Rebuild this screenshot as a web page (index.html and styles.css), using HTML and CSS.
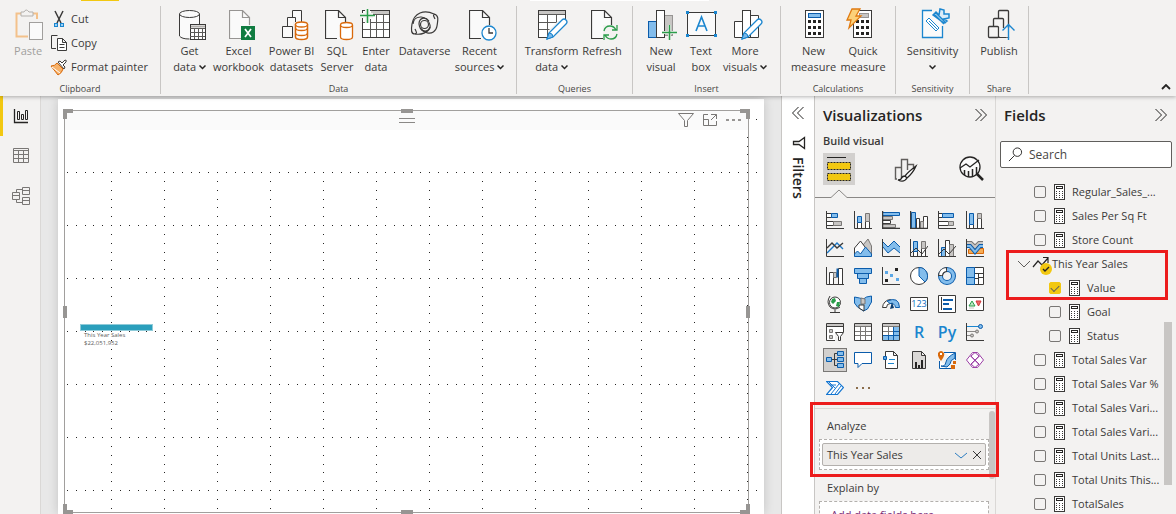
FILE: index.html
```html
<!DOCTYPE html>
<html lang="en">
<head>
<meta charset="utf-8">
<title>Report editor</title>
<link rel="stylesheet" href="styles.css">
</head>
<body>
<svg class="defs" aria-hidden="true">
  <symbol id="calc" viewBox="0 0 12 16"><rect x=".5" y=".5" width="10" height="15" fill="#fff" stroke="#3b3a39"/><rect x="2.5" y="2.5" width="6" height="2" fill="#fff" stroke="#252423"/><path d="M2 7.500h7M2 9.500h7M2 11.500h7M2 13.500h7" stroke="#3b3a39" stroke-dasharray="1 2" fill="none"/></symbol>
  <symbol id="down" viewBox="0 0 7 5"><path d="M.5 .5l3 3 3-3" fill="none" stroke="#252423" stroke-width="1.500"/></symbol>
  <symbol id="dbl" viewBox="0 0 14 14"><path d="M1.500 1l6 6-6 6M6.500 1l6 6-6 6" fill="none" stroke="#252423"/></symbol>
  <symbol id="pencil" viewBox="0 0 22 22"><path d="M1 21l2-6L16 2q2-2 4 0t0 4L7 19z" fill="#fff" stroke="#1b86cf" stroke-width="1.300"/><path d="M1 21l2-6q4 0 4 4z" fill="#7ab8e8" stroke="#1b86cf"/></symbol>
  <symbol id="doc" viewBox="0 0 22 30"><path d="M.5 .5h13l7 7v21.500h-20z" fill="#fafafa" stroke="none"/><path d="M12 28.500H.5V.5h13l7 7V15M13.500 .5v7h7" fill="none" stroke="currentColor" stroke-width="1.200"/></symbol>
</svg>
<header class="ribbon">
  <div class="tabs"><i class="tab-active"></i><i class="tab-white"></i></div>
  <section class="group clipboard">
    <div class="tools">
      <button class="big paste"><svg class="ico" viewBox="0 0 32 32"><path d="M9 4.500H4.500v23H16M21 4.500h4V10" fill="none" stroke="#f3c18b" stroke-width="2"/><path d="M9 7V3h3q2-4 5 0h4v4z" fill="#f3f2f1" stroke="#b3b0ad"/><rect x="17.500" y="13.500" width="13" height="17" fill="#fafafa" stroke="#a19f9d"/></svg><span>Paste</span></button>
      <div class="small-list">
        <button class="small"><svg viewBox="0 0 18 18"><path d="M5 1l6 12M13 1L7 13" stroke="#3b3a39" stroke-width="1.500"/><rect x="4.500" y="13.500" width="3" height="3" fill="#9bd0f5" stroke="#1b86cf"/><rect x="10.500" y="13.500" width="3" height="3" fill="#9bd0f5" stroke="#1b86cf"/></svg><span>Cut</span></button>
        <button class="small"><svg viewBox="0 0 18 18"><path d="M6 14.500H1.500v-13h6" fill="none" stroke="#3b3a39"/><path d="M7.500 4.500h5l4 4v8h-9zM12.500 4.500v4h4M9.500 10.500h5M9.500 13.500h5" fill="#fff" stroke="#3b3a39"/></svg><span>Copy</span></button>
        <button class="small"><svg viewBox="0 0 18 18"><path d="M1 8q4 0 6-3l6 6q-1 4-5 6z" fill="#f6b26b" stroke="#d9690b"/><path d="M2 9l8 6" stroke="#fff"/><path d="M8 4l2-1 2 2 3-3q2 0 1 2l-3 3 2 2-1 2z" fill="#fff" stroke="#3b3a39"/></svg><span>Format painter</span></button>
      </div>
    </div>
    <h2>Clipboard</h2>
  </section>
  <section class="group data">
    <div class="tools">
      <button class="big w46"><svg class="ico" viewBox="0 0 32 32"><path d="M6 5h19v10H16v15Q8 30 6 27z" fill="#fafafa"/><ellipse cx="15.500" cy="5" rx="10" ry="3.500" fill="#fafafa" stroke="#3b3a39"/><path d="M5.500 5v22q2 3 10 3M25.500 5v10" fill="none" stroke="#3b3a39"/><rect x="16.500" y="15.500" width="15" height="15" fill="#fff" stroke="#3b3a39"/><path d="M17 17.500h14" stroke="#b3b0ad" stroke-width="2"/><path d="M16 19.500h15M16 23.500h15M16 27.500h15M20.500 19v11M24.500 19v11M28.500 19v11" stroke="#5b5a58"/></svg><span>Get<br>data <svg class="dn"><use href="#down"/></svg></span></button>
      <button class="big w52"><svg class="ico grey" viewBox="0 0 32 32"><use href="#doc" x="6" y="1" width="22" height="30"/><rect x="18" y="17" width="14" height="14" fill="#107c41"/><path d="M22 20l6 8M28 20l-6 8" stroke="#fff" stroke-width="1.700"/></svg><span>Excel<br>workbook</span></button>
      <button class="big w54"><svg class="ico" viewBox="0 0 32 32"><path d="M16.500 28V1.500h9V28z" fill="#fafafa" stroke="#3b3a39"/><path d="M11.500 28V8.500h8V28z" fill="#fafafa" stroke="#3b3a39"/><path d="M6.500 28.500v-11h10v11z" fill="#fafafa" stroke="#3b3a39"/><path d="M17 13h15v18H17z" fill="#f3f2f1"/><path d="M19.500 15v13q0 2.500 6 2.500t6-2.500V15" fill="#fff" stroke="#d9690b" stroke-width="1.500"/><ellipse cx="25.500" cy="15.500" rx="6" ry="2.500" fill="#fff" stroke="#d9690b" stroke-width="1.300"/><path d="M19.500 19q0 2.500 6 2.500t6-2.500M19.500 24q0 2.500 6 2.500t6-2.500" fill="none" stroke="#d9690b" stroke-width="1.300"/></svg><span>Power BI<br>datasets</span></button>
      <button class="big w37"><svg class="ico" viewBox="0 0 32 32"><use href="#doc" x="4" y="1" width="22" height="30"/><path d="M19.500 16v12q0 2.500 6 2.500t6-2.500V16" fill="#fff" stroke="#d9690b" stroke-width="1.300"/><ellipse cx="25.500" cy="16" rx="6" ry="2.500" fill="#fff" stroke="#d9690b" stroke-width="1.300"/></svg><span>SQL<br>Server</span></button>
      <button class="big w41"><svg class="ico" viewBox="0 0 32 32"><rect x="2.500" y="1.500" width="27" height="27" fill="#fff" stroke="#3b3a39"/><path d="M11 3.500h18" stroke="#c8c6c4" stroke-width="3"/><path d="M3 13.500h26M3 20.500h26M10.500 10v18M16.500 6v22M23.500 6v22M10 5.500h19" stroke="#5b5a58" fill="none"/><path d="M0 6.500h13M7.500 0v14" stroke="#f3f2f1" stroke-width="5"/><path d="M0 6.500h15M7.500 0v14" stroke="#2a9d4a" stroke-width="1.500"/></svg><span>Enter<br>data</span></button>
      <button class="big w56"><svg class="ico" viewBox="0 0 32 32"><g fill="none" stroke="#3b3a39" stroke-width="1.200"><path d="M20 12c-4-5-10-3-10 3 0 9 16 14 18 2 1-6 2-11-3-12C15 0 5 4 3 15c-1 6-1 10 3 10 6 1 13-1 15-7"/><path d="M11 19c5 6 11 2 10-3C19 6 5 5 4 15M26 5c-2 1-2 1 0 5M6 25c2-1 2-1 0-5"/><circle cx="15.500" cy="15.500" r="4"/></g></svg><span>Dataverse</span></button>
      <button class="big w54"><svg class="ico" viewBox="0 0 32 32"><use href="#doc" x="5" y="1" width="22" height="30"/><circle cx="25" cy="24" r="7" fill="#fff" stroke="#1b86cf" stroke-width="1.300"/><path d="M25 19v5h4" fill="none" stroke="#3b3a39" stroke-width="1.300"/></svg><span>Recent<br>sources <svg class="dn"><use href="#down"/></svg></span></button>
    </div>
    <h2>Data</h2>
  </section>
  <section class="group queries">
    <div class="tools">
      <button class="big w55"><svg class="ico" viewBox="0 0 32 32"><rect x="2.500" y="1.500" width="27" height="27" fill="#fff" stroke="#3b3a39"/><path d="M3 3.500h26" stroke="#c8c6c4" stroke-width="3"/><path d="M3 5.500h26M3 13.500h26M3 20.500h26M11.500 6v22M20.500 6v22" stroke="#5b5a58"/><path d="M12 32V22l10-10h10v20z" fill="#f3f2f1"/><use href="#pencil" x="10" y="9" width="22" height="22"/></svg><span>Transform<br>data <svg class="dn"><use href="#down"/></svg></span></button>
      <button class="big w46"><svg class="ico" viewBox="0 0 32 32"><use href="#doc" x="5" y="1" width="22" height="30"/><rect x="17" y="16" width="15" height="15" fill="#f3f2f1"/><path d="M18 22q1-5 6-5 4 0 6 4M31 16v5h-5M31 25q-1 5-6 5-4 0-6-4M18 31v-5h5" fill="none" stroke="#2a9d4a" stroke-width="1.300"/></svg><span>Refresh</span></button>
    </div>
    <h2>Queries</h2>
  </section>
  <section class="group insert">
    <div class="tools">
      <button class="big w44"><svg class="ico" viewBox="0 0 32 32"><rect x="3.500" y="12.500" width="8" height="16" fill="#83bdec" stroke="#0b5cab"/><rect x="19.500" y="6.500" width="8" height="20" fill="#c8c6c4" stroke="#979593"/><rect x="11.500" y="1.500" width="8" height="27" fill="#fff" stroke="#3b3a39"/><path d="M24.500 16v15M17 23.500h15" stroke="#f3f2f1" stroke-width="3"/><path d="M24.500 16v15M17 23.500h15" stroke="#2a9d4a" stroke-width="1.500"/></svg><span>New<br>visual</span></button>
      <button class="big w36"><svg class="ico" viewBox="0 0 32 32"><rect x="2.500" y="3.500" width="28" height="23" fill="#fafafa" stroke="#3b3a39"/><path d="M1 2h3v3H1zM29 2h3v3h-3zM1 25h3v3H1zM29 25h3v3h-3z" fill="#1b86cf"/><path d="M11 22l5.500-14L22 22M13 17h7" fill="none" stroke="#1b86cf" stroke-width="1.600"/></svg><span>Text<br>box</span></button>
      <button class="big w52"><svg class="ico" viewBox="0 0 32 32"><path d="M5.500 28.500v-16h8v16zM21.500 6.500h8v22h-8z" fill="#fff" stroke="#3b3a39"/><rect x="13.500" y="1.500" width="8" height="27" fill="#fff" stroke="#3b3a39"/><use href="#pencil" x="12" y="9" width="22" height="22"/></svg><span>More<br>visuals <svg class="dn"><use href="#down"/></svg></span></button>
    </div>
    <h2>Insert</h2>
  </section>
  <section class="group calcs">
    <div class="tools">
      <button class="big w50"><svg class="ico" viewBox="0 0 32 32"><rect x="7.500" y="1.500" width="18" height="27" fill="#fff" stroke="#3b3a39"/><rect x="10.500" y="4.500" width="12" height="4" fill="#83bdec" stroke="#0b5cab"/><path d="M10 12.500h13M10 18.500h13M10 24.500h13" stroke="#252423" stroke-width="3" stroke-dasharray="3 2"/></svg><span>New<br>measure</span></button>
      <button class="big w49"><svg class="ico" viewBox="0 0 32 32"><rect x="6.500" y="1.500" width="18" height="27" fill="#fff" stroke="#3b3a39"/><rect x="12.500" y="4.500" width="9" height="4" fill="#c8c6c4" stroke="#979593"/><path d="M9 12.500h13M9 18.500h13M9 24.500h13" stroke="#252423" stroke-width="3" stroke-dasharray="3 2"/><path d="M5 0h8l-4 7h5L2 19l2-8H0z" fill="#fbd17a" stroke="#e07a10" stroke-width="1.300"/></svg><span>Quick<br>measure</span></button>
    </div>
    <h2>Calculations</h2>
  </section>
  <section class="group sens">
    <div class="tools">
      <button class="big w56"><svg class="ico" viewBox="0 0 32 32"><path d="M15 1.500H5.500v27h20V17" fill="#fafafa" stroke="#1b86cf" stroke-width="1.300"/><path d="M9 12l3-3 10 10-3 3zM12 12l8 8" fill="#fff" stroke="#1b86cf"/><path d="M17 5l10 10M18 3l11 11M16 6l3-3 3 3 1-6 4 1 0 4 5 0 0 4-5 1 3 2-3 2z" fill="#dcecf8" stroke="#1b86cf" stroke-width="1.500"/></svg><span>Sensitivity<br><svg class="dn"><use href="#down"/></svg></span></button>
    </div>
    <h2>Sensitivity</h2>
  </section>
  <section class="group share">
    <div class="tools">
      <button class="big w50"><svg class="ico" viewBox="0 0 32 32"><g fill="#f6f5f4" stroke="#3b3a39" stroke-width="1.300"><path d="M15.500 28V2.500q0-1 1-1h8q1 0 1 1V28z"/><path d="M10.500 28V10.500q0-1 1-1h8q1 0 1 1V28z"/><rect x="5.500" y="17.500" width="10" height="11" rx="1"/></g><path d="M16.500 19h14v9h-14z" fill="#f3f2f1"/><path d="M15.500 28.500H23" stroke="#3b3a39"/><path d="M25.500 31V16M19.500 21.500l6-6 6 6" fill="none" stroke="#1b86cf" stroke-width="1.400"/></svg><span>Publish</span></button>
    </div>
    <h2>Share</h2>
  </section>
  <button class="collapse" aria-label="Collapse ribbon"><svg viewBox="0 0 10 6"><path d="M1 5l4-4 4 4" fill="none" stroke="#252423" stroke-width="1.800"/></svg></button>
</header>
<main class="work">
  <nav class="rail">
    <button class="active" aria-label="Report"><svg viewBox="0 0 18 18"><path d="M2.500 2v13.500H16" stroke="#252423" fill="none" stroke-width="1.300"/><path d="M5.500 4.500h2v8h-2zM9.500 7.500h2v5h-2zM13.500 3.500h2v9h-2z" fill="none" stroke="#252423"/></svg></button>
    <button aria-label="Data"><svg viewBox="0 0 18 18"><path d="M1.500 1.500h15v14h-15zM1 3.500h16M1 7.500h16M1 11.500h16M6.500 4v12M11.500 4v12" fill="none" stroke="#797775"/></svg></button>
    <button aria-label="Model"><svg viewBox="0 0 18 18"><path d="M.5 5.500h7v7h-7zM.5 8.500h7M10.500 .5h7v7h-7zM10.500 3.500h7M10.500 10.500h7v7h-7zM10.500 13.500h7M4.500 5V2.500h6M4.500 13v2.500h6" fill="none" stroke="#797775"/></svg></button>
  </nav>
  <section class="canvas">
    <div class="page">
      <svg class="grid" aria-hidden="true">
        <defs>
          <pattern id="rows" x="0" y="20" width="53" height="53" patternUnits="userSpaceOnUse"><path d="M0 0h1v1H0zM9 0h1v1H9zM18 0h1v1h-1zM27 0h1v1h-1zM35 0h1v1h-1zM44 0h1v1h-1zM0 9h1v1H0zM0 18h1v1H0zM0 27h1v1H0zM0 35h1v1H0zM0 44h1v1H0z" fill="#252423"/></pattern>
        </defs>
        <rect x="7" y="73" width="100%" height="100%" fill="url(#rows)"/>
        <rect x="687" y="20" width="12" height="53" fill="url(#rows)"/>
      </svg>
      <div class="visual">
        <i class="h tl"></i><i class="h tr"></i><i class="h bl"></i><i class="h br"></i><i class="h ml"></i><i class="h mr"></i><i class="h mt"></i><i class="h mb"></i>
        <div class="visual-head">
          <svg class="grip" viewBox="0 0 16 6"><path d="M0 .5h16M0 4.500h16" stroke="#8a8886"/></svg>
          <div class="head-icons">
            <svg viewBox="0 0 18 18"><path d="M1.500 2.500h15l-6 7v6h-3v-6z" fill="none" stroke="#797775"/></svg>
            <svg viewBox="0 0 18 18"><path d="M7 3.500H2.500v11h13V10M10 3.500h5.500V8M15.500 3.500L10 9M2.500 8.500h5v6" fill="none" stroke="#797775"/></svg>
            <svg viewBox="0 0 18 18"><path d="M1 8h3v2H1zM7 8h3v2H7zM13 8h3v2h-3z" fill="#979593"/></svg>
          </div>
        </div>
        <div class="node"><div class="bar"></div><p>This Year Sales<br>$22,051,952</p></div>
      </div>
    </div>
  </section>
  <aside class="filters">
    <svg class="dbl flip"><use href="#dbl"/></svg>
    <svg class="funnel" viewBox="0 0 14 14"><path d="M12.500 1.500v11L7 8.500H1.500v-3H7z" fill="none" stroke="#252423" stroke-width="1.300"/></svg>
    <h2>Filters</h2>
  </aside>
  <aside class="vis">
    <div class="pane-head"><h2>Visualizations</h2><svg class="dbl"><use href="#dbl"/></svg></div>
    <h3>Build visual</h3>
    <div class="modes">
      <button class="on" aria-label="Build"><svg viewBox="0 0 32 32"><path d="M4 4.500h19" stroke="#252423"/><path d="M4.500 9.500h23v7h-23zM4.500 20.500h23v7h-23z" fill="#f2c811" stroke="#252423" stroke-dasharray="2 1"/></svg></button>
      <button aria-label="Format"><svg viewBox="0 0 32 32"><path d="M8 26H6.500V14.500h6V25M12.500 14V6.500h6V17M18.500 11.500h6v3" fill="none" stroke="#605e5c" stroke-width="1.400"/><path d="M27 13q-8 6-11 10l2 2q6-5 9-12zM16 23q-3 0-4 3-1 1-3 1 6 3 9-2" fill="#fff" stroke="#252423" stroke-width="1.300"/></svg></button>
      <button aria-label="Analytics"><svg viewBox="0 0 32 32"><circle cx="15" cy="14" r="10" fill="#fafafa" stroke="#252423" stroke-width="1.300"/><path d="M5 15l6-4 4 3 9-7" fill="none" stroke="#252423" stroke-width="1.300"/><path d="M9.500 17v5M13.500 18v6M17.500 16v8M21.500 14v7" stroke="#252423" stroke-width="1.500"/><path d="M22 21l6 6" stroke="#252423" stroke-width="2.500"/></svg></button>
    </div>
    <svg class="caret" viewBox="0 0 180 9" preserveAspectRatio="xMinYMin slice"><path d="M0 8.500h16l8-7.500 8 7.500h400" fill="none" stroke="#8a8886"/></svg>
    <div class="types">
      <button aria-label="Stacked bar"><svg viewBox="0 0 18 18"><path class="w" d="M.5 2.500h5v4h-5zM.5 10.500h7v4h-7z"/><path class="b" d="M5.500 2.500h6v4h-6z"/><path class="g" d="M7.500 10.500h8v4h-8z"/><path class="ax" d="M.5 0v17.500H18"/></svg></button>
      <button aria-label="Stacked column"><svg viewBox="0 0 18 18"><path class="w" d="M3.500 11.500h4v6h-4zM11.500 10.500h4v7h-4z"/><path class="b" d="M3.500 5.500h4v6h-4z"/><path class="g" d="M11.500 2.500h4v8h-4z"/><path class="ax" d="M.5 0v17.500H18"/></svg></button>
      <button aria-label="Clustered bar"><svg viewBox="0 0 18 18"><path class="b" d="M.5 1.500h17v3H.5z"/><path class="g" d="M.5 5.500h10v3H.5z"/><path class="w" d="M.5 9.500h8v3h-8z"/><path class="g" d="M.5 13.500h13v3H.5z"/><path class="ax" d="M.5 0v17.500H18" stroke-width="1.500"/></svg></button>
      <button aria-label="Clustered column"><svg viewBox="0 0 18 18"><path class="b" d="M1.500 1.500h4v16h-4z"/><path class="w" d="M6.500 7.500h3v10h-3zM13.500 5.500h4v12h-4z"/><path class="g" d="M10.500 10.500h3v7h-3z"/><path class="ax" d="M.5 0v17.500H18" stroke-width="1.500"/></svg></button>
      <button aria-label="100% stacked bar"><svg viewBox="0 0 18 18"><path class="w" d="M.5 2.500h4v4h-4zM.5 10.500h10v4H.5z"/><path class="b" d="M4.500 2.500h11v4h-11z"/><path class="g" d="M10.500 10.500h5v4h-5z"/><path class="ax" d="M.5 0v17.500H18"/></svg></button>
      <button aria-label="100% stacked column"><svg viewBox="0 0 18 18"><path class="w" d="M3.500 13.500h4v4h-4zM11.500 7.500h4v10h-4z"/><path class="b" d="M3.500 2.500h4v11h-4z"/><path class="g" d="M11.500 2.500h4v5h-4z"/><path class="ax" d="M.5 0v17.500H18"/></svg></button>

      <button aria-label="Line"><svg viewBox="0 0 18 18"><path d="M1 14l6-6 4-4 6 6" fill="none" stroke="#1b76c4" stroke-width="1.400"/><path d="M1 9l5-5 5 5 6-5" fill="none" stroke="#3b3a39" stroke-width="1.400"/><path class="ax" d="M.5 0v17.500H18"/></svg></button>
      <button aria-label="Area"><svg viewBox="0 0 18 18"><path class="g" d="M9 17V6l5-6 3.500 7v10z"/><path class="w" d="M.5 17V9l6-7 6 8v7z"/><path class="b" d="M.5 17.500V15l3-3 3 3 5-7 6 7v2.500z"/></svg></button>
      <button aria-label="Stacked area"><svg viewBox="0 0 18 18"><path d="M1 3l5 5 6-6 6 6v6l-6-5-6 5-5-6z" fill="#83bdec"/><path d="M1 3l5 5 6-6 6 6M1 8l5 6 6-5 6 5" fill="none" stroke="#0b5cab"/><path class="ax" d="M.5 0v17.500H18"/></svg></button>
      <button aria-label="Line and stacked column"><svg viewBox="0 0 18 18"><path class="w" d="M3.500 10.500h4v7h-4zM11.500 9.500h4v8h-4z"/><path class="b" d="M3.500 2.500h4v10h-4z"/><path class="g" d="M11.500 2.500h4v7h-4z"/><path class="ax" d="M.5 0v17.500H18M1 14l5-5 6 6 6-8"/></svg></button>
      <button aria-label="Line and clustered column"><svg viewBox="0 0 18 18"><path class="b" d="M3.500 8.500h4v9h-4z"/><path class="w" d="M7.500 1.500h4v16h-4z"/><path class="g" d="M11.500 5.500h4v12h-4z"/><path class="ax" d="M.5 0v17.500H18M1 15l5-5 5 5 7-8"/></svg></button>
      <button aria-label="Ribbon"><svg viewBox="0 0 18 18"><path d="M2.500 10.500h5l5-1h5v5h-15z" fill="#f5ab55" stroke="#d9690b"/><path d="M1 4h4l4 4 4-4h4" fill="none" stroke="#797775" stroke-width="4"/><path d="M1 4h4l4 4 4-4h4" fill="none" stroke="#c8c6c4" stroke-width="2"/><path d="M1 7h3l5 6 5-6h3" fill="none" stroke="#0b5cab" stroke-width="4"/><path d="M1 7h3l5 6 5-6h3" fill="none" stroke="#83bdec" stroke-width="2"/><path class="ax" d="M.5 0v17.500H18"/></svg></button>

      <button aria-label="Waterfall"><svg viewBox="0 0 18 18"><path class="w" d="M3.500 5.500h4v12h-4zM12.500 1.500h4v16h-4z"/><path class="g" d="M7.500 5.500h3v5h-3z"/><path d="M10.500 1.500h2v9h-2z" fill="#0b5cab"/><path class="ax" d="M.5 0v17.500H18"/></svg></button>
      <button aria-label="Funnel"><svg viewBox="0 0 18 18"><path class="b" d="M.5 1.500h17v5H.5zM3.500 6.500h11v5h-11zM5.500 11.500h7v5h-7z"/></svg></button>
      <button aria-label="Scatter"><svg viewBox="0 0 18 18"><path d="M3 4h3v3H3zM8 7h3v3H8zM14 11h3v3h-3z" fill="#5ba7e6"/><path d="M13 1h3v3h-3zM3 12h3v3H3z" fill="#252423"/><path class="ax" d="M.5 0v17.500H18"/></svg></button>
      <button aria-label="Pie"><svg viewBox="0 0 18 18"><circle class="w" cx="9" cy="9" r="8.500"/><path class="b" d="M9 .5a8.500 8.500 0 0 1 6 14.500L9 9z"/></svg></button>
      <button aria-label="Donut"><svg viewBox="0 0 18 18"><circle cx="9" cy="9" r="6.500" fill="none" stroke="#0b5cab" stroke-width="5"/><circle cx="9" cy="9" r="6.500" fill="none" stroke="#83bdec" stroke-width="3"/><path d="M2.500 9A6.500 6.500 0 0 1 9 2.500" fill="none" stroke="#3b3a39" stroke-width="5"/><path d="M2.500 8A6.500 6.500 0 0 1 8 2.500" fill="none" stroke="#fff" stroke-width="3"/></svg></button>
      <button aria-label="Treemap"><svg viewBox="0 0 18 18"><path class="w" d="M8.500 .5h9v17h-9zM9 6.500h8M12.500 10.500h5M12.500 7v10M9 11.500h3"/><path class="b" d="M.5 .5h8v17h-8zM.5 10.500h8"/></svg></button>

      <button aria-label="Map"><svg viewBox="0 0 18 18"><circle cx="9" cy="7.500" r="5.500" fill="#fff" stroke="#3b3a39"/><path d="M6 4l3-1 1 3-3 3-2-2zM11 7l3 0-1 5-3-1z" fill="#2a9d4a"/><path class="ax" d="M4 1Q0 7 4 12q5 4 10 0M9 14.500v2.500M4 17.500h10"/></svg></button>
      <button aria-label="Filled map"><svg viewBox="0 0 18 18"><path class="b" d="M.5 2l5 1 4 1 3-2 5-1v6l-4 7-4 2-6-4-3-4z"/><path class="g" d="M7 3l4 1v5H7z"/><path class="w" d="M5 10h5v6l-5-3z"/></svg></button>
      <button aria-label="Gauge"><svg viewBox="0 0 18 18"><path class="w" d="M.5 12.500a8.500 8.500 0 0 1 8-8v4q-4 0-4 4z"/><path class="b" d="M5 6q12-5 12.500 6.500h-4Q13 8 8 8.500z"/><path d="M8 14l2-7 2 6z" fill="#0b3d70"/></svg></button>
      <button aria-label="Card"><svg viewBox="0 0 18 18"><path class="w" d="M.5 2.500h17v13H.5z"/><text x="9" y="12" class="num">123</text></svg></button>
      <button aria-label="Multi-row card"><svg viewBox="0 0 18 18"><path class="w" d="M.5 .5h17v17H.5z"/><path d="M5 5h10M5 9h6M5 14h9" stroke="#0b5cab" stroke-width="2"/><path class="ax" d="M3.500 2v13"/></svg></button>
      <button aria-label="KPI"><svg viewBox="0 0 18 18"><path class="w" d="M.5 2.500h17v13H.5z"/><path d="M3 11l3-5 3 5z" fill="#bfe5c7" stroke="#2a9d4a"/><path d="M10 6h5l-2.500 5z" fill="#f26a6a" stroke="#d13438"/><path d="M3 13h5" stroke="#c8c6c4"/></svg></button>

      <button aria-label="Slicer"><svg viewBox="0 0 18 18"><path class="w" d="M.5 .5h17v17H.5z"/><path d="M1 2h16" stroke="#c8c6c4" stroke-width="2"/><path class="ax" d="M.5 3.500h17"/><path class="g" d="M3.500 6.500h3v3h-3zM3.500 12.500h3v3h-3z"/><path d="M9 9h10v10H9z" fill="#f3f2f1"/><path class="w" d="M9.500 9.500h8l-3 4v4h-2v-4z"/></svg></button>
      <button aria-label="Table"><svg viewBox="0 0 18 18"><path class="w" d="M.5 .5h17v17H.5z"/><path d="M1 2h16" stroke="#c8c6c4" stroke-width="2"/><path d="M1 3.500h16M1 8.500h16M1 12.500h16M6.500 4v13M11.500 4v13" stroke="#797775"/></svg></button>
      <button aria-label="Matrix"><svg viewBox="0 0 18 18"><path class="w" d="M.5 .5h17v17H.5z"/><path d="M1 2h16" stroke="#c8c6c4" stroke-width="2"/><path d="M12 4h5v13H1v-4h11z" fill="#83bdec"/><path d="M1 3.500h16M1 8.500h11M6.500 4v9M11.500 4v9" stroke="#797775"/><path d="M12 8.500h5M1 12.500h16M6.500 13v4M11.500 4v13" stroke="#0b5cab"/></svg></button>
      <button class="letter">R</button>
      <button class="letter">Py</button>
      <button aria-label="Key influencers"><svg viewBox="0 0 18 18"><path d="M1 3.500h12" stroke="#1b86cf"/><circle class="b" cx="14.500" cy="3.500" r="2"/><path d="M1 8.500h9M1 12.500h4" stroke="#8a8886"/><circle class="g" cx="11" cy="8.500" r="1.500"/><circle class="g" cx="6" cy="12.500" r="1.500"/><path class="ax" d="M.5 0v17.500H18"/></svg></button>

      <button class="on" aria-label="Decomposition tree"><svg viewBox="0 0 18 18"><path class="ax" d="M5 8.500h7M12 2.500H8.500v12H12"/><path class="b" d="M.5 6.500h5v4h-5zM11.500 .5h6v4h-6zM11.500 6.500h6v4h-6zM11.500 12.500h6v4h-6z"/></svg></button>
      <button aria-label="Q and A"><svg viewBox="0 0 18 18"><path d="M.5 1.500h17v11H8l-4 4v-4H.5z" fill="#fff" stroke="#0b5cab"/></svg></button>
      <button aria-label="Narrative"><svg viewBox="0 0 18 18"><path class="w" d="M3.500 .5h8l4 4v13h-12zM11.500 .5v4h4"/><path d="M1.500 5.500h3v3h-3z" fill="#5ba7e6" stroke="#0b5cab"/><path d="M7 8.500h6M6 12.500h6" stroke="#1b86cf"/></svg></button>
      <button aria-label="Paginated report"><svg viewBox="0 0 18 18"><path d="M2.500 .5h9l4 4v13h-13zM11.500 .5v4h4" fill="#dad8d6" stroke="#3b3a39"/><path d="M5 11h2v6H5zM8 14h2v3H8zM11 9h2v8h-2z" fill="#252423"/></svg></button>
      <button aria-label="ArcGIS map"><svg viewBox="0 0 18 18"><path d="M6 1.500h11.500V9M1.500 10v7.500H13" fill="#fff" stroke="#0b5cab"/><path class="b" d="M3 15q4 1 5-4t9-9v5q-5 2-5 6l-3 3z"/><path d="M0 2q3-4 6 0 1 3-3 8-4-5-3-8z" fill="#d9690b"/><path d="M2 2h2v2H2z" fill="#fff"/><path d="M15 10h3v3h-3zM13 14h4v4h-4z" fill="#d9690b"/></svg></button>
      <button aria-label="Power Apps"><svg viewBox="0 0 18 18"><path d="M6.500 1.500h5l6 7.500-6 7.500h-5L.5 9z" fill="#fff" stroke="#9b3fa6"/><path d="M4.500 5l8.500 8.500M13.500 5L5 13.500M9 1.500L5 5l4 4 4-4zM9 16.500L5 13l4-4 4 4z" fill="none" stroke="#9b3fa6"/></svg></button>

      <button aria-label="Power Automate"><svg viewBox="0 0 18 18"><path d="M.5 2.500h11l6 6-6 7H.5l6-7z" fill="#fff" stroke="#1476d1" stroke-width="1.200"/><path d="M5 15l8-10M9 15l6-8M4 6l6 0M3 3l6 6" fill="none" stroke="#1476d1"/></svg></button>
      <button aria-label="More visuals"><svg viewBox="0 0 18 18"><path d="M2 8h2v2H2zM8 8h2v2H8zM14 8h2v2h-2z" fill="#8a6d4b"/></svg></button>
    </div>
    <div class="wells">
      <h4>Analyze</h4>
      <div class="well"><div class="pill"><span>This Year Sales</span><svg viewBox="0 0 12 12"><path d="M0 4l6 5 6-5" fill="none" stroke="#2b7cc0"/></svg><svg viewBox="0 0 12 12"><path d="M2 2l8 8M10 2l-8 8" stroke="#3b3a39"/></svg></div></div>
      <h4>Explain by</h4>
      <div class="well empty">Add data fields here</div>
      <i class="thumb"></i><i class="callout"></i>
    </div>
  </aside>
  <aside class="fields">
    <div class="pane-head"><h2>Fields</h2><svg class="dbl"><use href="#dbl"/></svg></div>
    <div class="search"><svg viewBox="0 0 16 16"><circle cx="10" cy="5.500" r="4.500" fill="none" stroke="#252423"/><path d="M7 9l-6 6" stroke="#252423"/></svg><input type="text" placeholder="Search" aria-label="Search"></div>
    <div class="tree">
      <label><input type="checkbox"><svg><use href="#calc"/></svg><span>Regular_Sales_...</span></label>
      <label><input type="checkbox"><svg><use href="#calc"/></svg><span>Sales Per Sq Ft</span></label>
      <label><input type="checkbox"><svg><use href="#calc"/></svg><span>Store Count</span></label>
      <div class="picked">
        <div class="parent"><svg class="exp" viewBox="0 0 12 8"><path d="M0 1l6 6 6-6" fill="none" stroke="#605e5c"/></svg><svg class="trend" viewBox="0 0 20 20"><path d="M1 11l5-6 4 4 6-7M11 1.500h5V7" fill="none" stroke="#252423" stroke-width="1.200"/><circle cx="14" cy="13" r="6" fill="#f2c811"/><path d="M11 13l2 2 4-4" fill="none" stroke="#252423" stroke-width="1.400"/></svg><span>This Year Sales</span></div>
        <label class="sub"><input type="checkbox" checked><svg><use href="#calc"/></svg><span>Value</span></label>
        <i class="callout"></i>
      </div>
      <label class="sub"><input type="checkbox"><svg><use href="#calc"/></svg><span>Goal</span></label>
      <label class="sub"><input type="checkbox"><svg><use href="#calc"/></svg><span>Status</span></label>
      <label><input type="checkbox"><svg><use href="#calc"/></svg><span>Total Sales Var</span></label>
      <label><input type="checkbox"><svg><use href="#calc"/></svg><span>Total Sales Var %</span></label>
      <label><input type="checkbox"><svg><use href="#calc"/></svg><span>Total Sales Vari...</span></label>
      <label><input type="checkbox"><svg><use href="#calc"/></svg><span>Total Sales Vari...</span></label>
      <label><input type="checkbox"><svg><use href="#calc"/></svg><span>Total Units Last...</span></label>
      <label><input type="checkbox"><svg><use href="#calc"/></svg><span>Total Units This...</span></label>
      <label><input type="checkbox"><svg><use href="#calc"/></svg><span>TotalSales</span></label>
      <i class="thumb"></i>
    </div>
  </aside>
</main>
</body>
</html>
```
FILE: styles.css
```css
* { box-sizing: border-box; }
body {
  margin: 0; height: 100vh; overflow: hidden;
  display: flex; flex-direction: column;
  background: #f3f2f1; color: #3b3a39;
  font: 11px/16px "Open Sans", "Noto Sans", sans-serif;
}
h2, h3, h4, p { margin: 0; }
button { background: none; border: 0; padding: 0; color: inherit; font: inherit; }
svg { display: block; flex: none; }
.defs { position: absolute; width: 0; height: 0; }

/* Ribbon */
.ribbon {
  position: relative; z-index: 2; flex: none;
  display: flex; padding: 6px 0 2px;
  background: #f3f2f1; box-shadow: 0 1px 4px rgba(0, 0, 0, .3);
}
.tabs { position: absolute; top: 0; left: 81px; display: flex; gap: 411px; }
.tabs i { height: 1px; width: 38px; background: #f2c811; }
.tabs .tab-white { width: 179px; background: #fff; }
.group {
  display: flex; flex-direction: column; justify-content: space-between; align-items: center;
  height: 88px; padding-bottom: 0; border-right: 1px solid #c8c6c4;
}
.clipboard { width: 161px; }
.data { width: 356px; }
.data .tools { padding-right: 4px; }
.queries { width: 116px; }
.insert { width: 148px; }
.insert .tools { padding-right: 3px; }
.calcs { width: 115px; }
.sens { width: 74px; }
.share { width: 59px; }
.group h2 { font-size: 9px; font-weight: 400; line-height: 10px; color: #484644; }
.tools { display: flex; align-items: flex-start; padding-top: 3px; }
.big { display: flex; flex-direction: column; align-items: center; gap: 2px; white-space: nowrap; }
.big > span { text-align: center; }
.ico { width: 32px; height: 32px; overflow: visible; color: #3b3a39; }
.grey { color: #979593; }
.dn { display: inline-block; width: 7px; height: 5px; vertical-align: 1px; }
.paste { width: 32px; color: #a19f9d; }
.small-list { display: flex; flex-direction: column; gap: 8px; padding: 2px 0 0 6px; }
.small { display: flex; align-items: center; gap: 3px; height: 16px; white-space: nowrap; }
.small svg { width: 18px; height: 18px; }
.w36 { width: 36px; } .w37 { width: 37px; } .w41 { width: 41px; } .w44 { width: 44px; }
.w46 { width: 46px; } .w49 { width: 49px; } .w50 { width: 50px; } .w52 { width: 52px; }
.w54 { width: 54px; } .w55 { width: 55px; } .w56 { width: 56px; }
.collapse { margin: auto 5px 4px auto; }
.collapse svg { width: 10px; height: 6px; }

/* Work area */
.work { flex: 1; min-height: 0; display: flex; }
.rail { width: 41px; border-right: 1px solid #dad8d6; }
.rail button { display: flex; align-items: center; justify-content: center; width: 40px; height: 40px; border-left: 3px solid transparent; padding-right: 1px; }
.rail .active { border-color: #f2c811; }
.rail svg { width: 18px; height: 18px; }

.canvas { flex: 1; min-width: 0; padding: 3px 17px 0; background: #e8e8e8; display: flex; overflow: hidden; }
.page { position: relative; flex: 1; background: #fff; padding: 11px 15px 1px 6px; box-shadow: 0 0 10px rgba(0, 0, 0, .16); }
.grid { position: absolute; inset: 0; width: 100%; height: 100%; }
.visual { position: relative; height: 100%; border: 1px solid #a19f9d; }
.visual-head { display: flex; align-items: center; justify-content: center; position: relative; height: 19px; background: #fafafa; }
.grip { width: 16px; height: 6px; }
.head-icons { position: absolute; right: 5px; top: 0; display: flex; gap: 6px; }
.head-icons svg { width: 18px; height: 18px; }
.h { position: absolute; z-index: 1; width: 10px; height: 10px; border: 0 solid #979593; }
.tl { left: -2px; top: -2px; border-width: 4px 0 0 4px; }
.tr { right: -2px; top: -2px; border-width: 4px 4px 0 0; }
.bl { left: -2px; bottom: -2px; border-width: 0 0 4px 4px; }
.br { right: -2px; bottom: -2px; border-width: 0 4px 4px 0; }
.ml, .mr { top: calc(50% - 6px); height: 12px; border-left-width: 4px; width: 4px; }
.ml { left: -2px; } .mr { right: -2px; }
.mt, .mb { left: calc(50% - 6px); width: 12px; border-top-width: 4px; height: 4px; }
.mt { top: -2px; } .mb { bottom: -2px; }
.node { position: absolute; left: 15px; top: 213px; width: 73px; }
.bar { height: 7px; background: #2b9fbc; border: 1px solid #8fcbd9; }
.node p { padding: 0 4px; font-size: 6px; line-height: 8px; color: #605e5c; }

/* Panes */
.filters { width: 34px; background: #fff; border: solid #c8c6c4; border-width: 0 1px; padding-top: 10px; display: flex; flex-direction: column; align-items: center; }
.dbl { width: 14px; height: 14px; }
.flip { transform: scaleX(-1); }
.funnel { width: 14px; height: 14px; margin: 16px 0 7px 2px; }
.filters h2 { writing-mode: vertical-rl; font-size: 14px; font-weight: 600; line-height: 20px; color: #252423; }
.pane-head { display: flex; align-items: center; justify-content: space-between; height: 20px; }
.pane-head h2 { font-size: 15px; font-weight: 600; line-height: 20px; color: #252423; }
.vis { width: 181px; border-right: 1px solid #dad8d6; padding-top: 9px; }
.vis .pane-head { padding: 0 7px 0 8px; }
.vis h3 { padding: 8px 8px 0; font-size: 11px; font-weight: 600; }
.modes { display: flex; justify-content: space-between; padding: 4px 8px; }
.modes button, .modes svg { width: 32px; height: 32px; }
.modes .on { background: #d2d0ce; }
.caret { width: 100%; height: 9px; }
.types { display: grid; grid-template-columns: repeat(6, 24px); gap: 4px; padding: 10px 8px 8px; }
.types button { width: 24px; height: 24px; padding: 3px; }
.types svg { width: 18px; height: 18px; }
.types .on { padding: 2px; background: #d2d0ce; border: 1px solid #797775; }
.types .letter { padding: 0; color: #1b86cf; font-size: 16px; line-height: 20px; font-weight: 600; }
.w { fill: #fff; stroke: #3b3a39; }
.b { fill: #83bdec; stroke: #0b5cab; }
.g { fill: #c8c6c4; stroke: #797775; }
.ax { fill: none; stroke: #3b3a39; }
.num { font: 9px "Open Sans", sans-serif; fill: #0b6cbd; text-anchor: middle; }
.wells { position: relative; border-top: 1px solid #dad8d6; padding: 9px 6px 0 4px; }
.wells h4 { padding: 0 8px; font-size: 11px; font-weight: 400; }
.well { margin: 5px 0 10px; height: 31px; padding: 3px 2px; background: #fff; border: 1px dashed #b3b0ad; }
.pill { display: flex; align-items: center; gap: 4px; height: 23px; padding: 0 2px 0 4px; background: #edebe9; border: 1px solid #b3b0ad; border-radius: 2px; }
.pill span { flex: 1; }
.pill svg { width: 12px; height: 12px; }
.empty { padding: 5px 11px; color: #742774; }
.thumb { position: absolute; background: #c8c6c4; }
.wells .thumb { right: 0; top: 2px; width: 6px; height: 68px; border-radius: 3px; }
.callout { position: absolute; border: 3px solid #ec1c1c; }
.wells .callout { z-index: 1; left: -5px; right: -4px; top: -7px; height: 75px; }

.fields { width: 180px; padding: 9px 4px 0; }
.fields .pane-head { padding: 0 4px; }
.search { display: flex; align-items: center; gap: 6px; height: 27px; margin: 16px 0 12px; padding: 0 7px; background: #fff; border: 1px solid #605e5c; border-radius: 2px; }
.search svg { width: 15px; height: 15px; }
.search input { flex: 1; min-width: 0; border: 0; padding: 0; background: none; font: inherit; font-size: 12px; }
.search input::placeholder { color: #484644; opacity: 1; }
.tree { position: relative; }
.tree label, .parent { display: flex; align-items: center; height: 24px; padding-left: 34px; white-space: nowrap; }
.tree .sub { padding-left: 49px; }
.tree input { appearance: none; flex: none; width: 12px; height: 12px; margin: 0 8px 0 0; border: 1px solid #797775; border-radius: 2px; }
.tree input:checked { background: #f2c811; border-color: #f2c811; }
.tree input:checked::after { content: ""; display: block; width: 7px; height: 4px; margin: 2px 1px; border: solid #605e5c; border-width: 0 0 1px 1px; transform: rotate(-45deg); }
.tree label svg { width: 12px; height: 16px; margin-right: 6px; }
.tree .parent { padding-left: 18px; }
.exp { width: 12px; height: 8px; }
.trend { width: 20px; height: 20px; margin: 4px 0 0 2px; }
.picked { position: relative; }
.picked .callout { left: 6px; right: 4px; top: -2px; height: 50px; }
.tree .thumb { right: 0; top: 142px; width: 8px; height: 163px; }
```
